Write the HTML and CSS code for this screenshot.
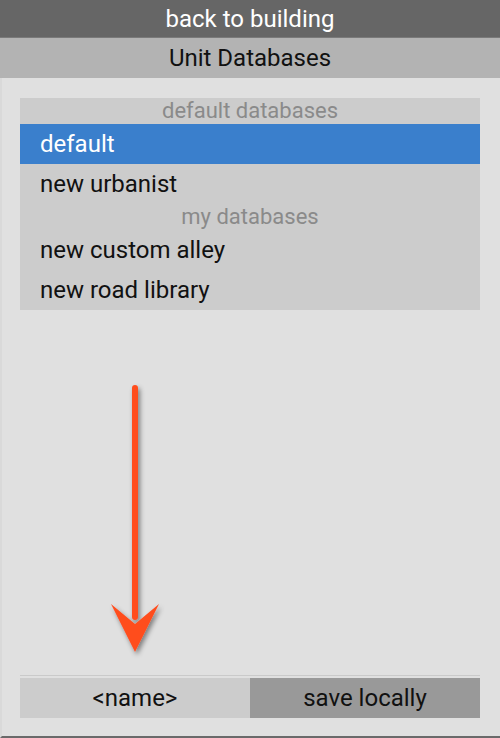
FILE: index.html
```html
<!DOCTYPE html>
<html>
<head>
<meta charset="utf-8">
<link rel="stylesheet" href="styles.css">
</head>
<body>
<div class="app">
  <div class="topbar">back to building</div>
  <div class="titlebar">Unit Databases</div>
  <div class="content">
    <div class="list">
      <div class="group">default databases</div>
      <div class="item selected">default</div>
      <div class="item">new urbanist</div>
      <div class="group">my databases</div>
      <div class="item">new custom alley</div>
      <div class="item">new road library</div>
    </div>
    <div class="spacer">
      <svg class="arrow" width="80" height="290" viewBox="0 0 80 290">
        <defs>
          <filter id="sh" x="-50%" y="-10%" width="200%" height="130%">
            <feDropShadow dx="2" dy="3" stdDeviation="2.5" flood-color="#000" flood-opacity="0.45"/>
          </filter>
        </defs>
        <g filter="url(#sh)" fill="#ff4d1f">
          <rect x="30" y="7" width="6" height="235" rx="3"/>
          <polygon points="9,226 33,246 57,226 33,274"/>
        </g>
      </svg>
    </div>
    <div class="footer">
      <div class="btn name">&lt;name&gt;</div>
      <div class="btn save">save locally</div>
    </div>
  </div>
</div>
</body>
</html>
```

FILE: styles.css
```css
html, body {
  margin: 0;
  padding: 0;
  width: 500px;
  height: 738px;
  overflow: hidden;
  background: #e0e0e0;
  font-family: Roboto, "Noto Sans", sans-serif;
}
.app {
  height: 736px;
  display: flex;
  flex-direction: column;
  border-bottom: 2px solid #6a6a6a;
  border-left: 2px solid rgba(0,0,0,0.03);
}
.topbar {
  height: 37px;
  background: #666666;
  color: #ffffff;
  font-size: 24px;
  display: flex;
  align-items: center;
  justify-content: center;
  border-bottom: 1px solid #7a7a7a;
  margin-left: -2px;
}
.titlebar {
  height: 40px;
  background: #b3b3b3;
  color: #111;
  font-size: 24px;
  display: flex;
  align-items: center;
  justify-content: center;
  margin-left: -2px;
}
.content {
  flex: 1;
  display: flex;
  flex-direction: column;
  padding: 20px 20px 18px 18px;
}
.list {
  background: #cccccc;
}
.group {
  height: 26px;
  line-height: 26px;
  text-align: center;
  color: #8a8a8a;
  font-size: 22px;
}
.item {
  height: 40px;
  line-height: 40px;
  padding-left: 20px;
  font-size: 24px;
  color: #111;
}
.item.selected {
  background: #3a7fcc;
  color: #ffffff;
}
.spacer {
  flex: 1;
  position: relative;
}
.arrow {
  position: absolute;
  left: 82px;
  top: 68px;
}
.footer {
  display: flex;
  border-top: 1px solid #cacaca;
  padding-top: 2px;
}
.btn {
  flex: 1;
  height: 40px;
  display: flex;
  align-items: center;
  justify-content: center;
  font-size: 24px;
  color: #111;
}
.name { background: #cccccc; }
.save { background: #999999; }
```
